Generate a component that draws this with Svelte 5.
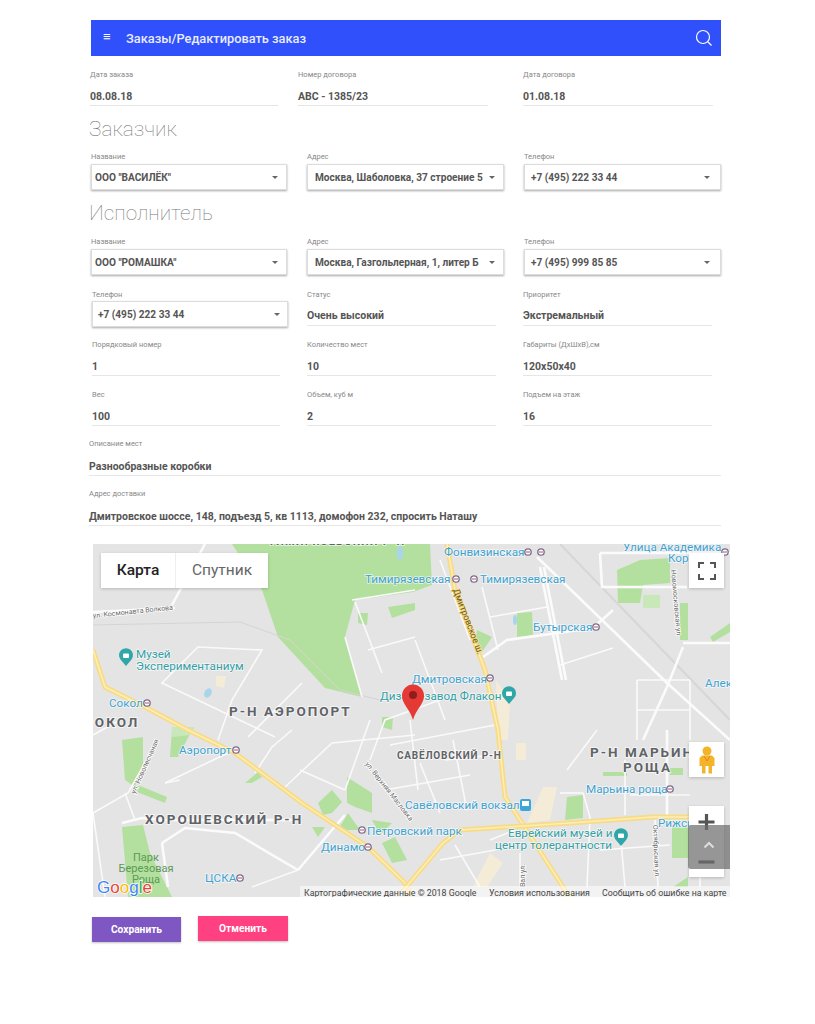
<script>
  const dates = [
    { label: 'Дата заказа', value: '08.08.18' },
    { label: 'Номер договора', value: 'АВС - 1385/23' },
    { label: 'Дата договора', value: '01.08.18' }
  ];
  const customer = [
    { label: 'Название', value: 'ООО "ВАСИЛЁК"' },
    { label: 'Адрес', value: 'Москва, Шаболовка, 37 строение 5' },
    { label: 'Телефон', value: '+7 (495) 222 33 44' }
  ];
  const contractor = [
    { label: 'Название', value: 'ООО "РОМАШКА"' },
    { label: 'Адрес', value: 'Москва, Газгольлерная, 1, литер Б' },
    { label: 'Телефон', value: '+7 (495) 999 85 85' }
  ];
  const cargoA = [
    { label: 'Порядковый номер', value: '1' },
    { label: 'Количество мест', value: '10' },
    { label: 'Габариты (ДхШхВ),см', value: '120х50х40' }
  ];
  const cargoB = [
    { label: 'Вес', value: '100' },
    { label: 'Объем, куб м', value: '2' },
    { label: 'Подъем на этаж', value: '16' }
  ];

  // map layers use page coordinates, see the svg viewBox
  const parks = [
    '232,544 430,544 432,585 413,592 355,600 345,637 362,697 325,688 278,637 262,590',
    '617,570 640,560 670,558 670,583 643,585 640,603 618,603',
    '517,613 532,612 533,635 517,637',
    '477,630 492,637 482,652 475,643',
    '680,603 688,603 688,640 680,640',
    '710,637 730,623 730,632 713,642',
    '567,797 583,795 583,818 565,820',
    '672,827 690,827 690,858 672,858',
    '603,772 627,772 627,776 603,776',
    '670,768 683,768 683,775 670,775',
    '673,887 688,877 688,887',
    '122,740 143,737 143,763 135,787 125,780',
    '172,730 192,730 178,757 170,757',
    '138,785 167,797 165,803 137,792',
    '122,827 143,825 150,853 172,897 128,897',
    '318,803 332,790 342,802 332,813 323,815',
    '347,777 372,793 372,813 355,807 347,803',
    '348,813 360,830 338,830',
    '372,820 392,823 380,835',
    '382,843 395,837 407,860 392,863',
    '245,783 258,772 262,777 252,783',
    '312,827 325,827 318,837',
    '388,607 415,603 415,610 392,618',
    '358,613 368,613 367,625 358,623',
    '382,717 393,717 392,730 382,727'
  ];
  const lightParks = ['643,595 660,595 660,608 643,608', '172,727 195,727 190,735 172,737'];
  const sand = [
    '543,787 557,787 550,820 527,823',
    '490,853 503,863 487,887 473,887',
    '516,743 526,743 526,760 516,760',
    '496,680 510,700 508,740 498,740',
    '216,676 226,676 224,688 216,686'
  ];
  const yellow = [
    '93,650 105,687 145,707 188,730 235,753 302,803 368,847 405,883 412,897',
    '447,544 455,590 485,670 498,730 505,797 520,820 563,887 570,897',
    '690,817 653,817 570,823 460,830 443,843 402,892'
  ];
  const thick = [
    '205,544 172,605',
    '92,612 175,608',
    '600,553 730,553',
    '600,553 602,587 687,587',
    '537,557 667,683 730,740',
    '540,567 562,680',
    '544,567 566,680',
    '483,657 507,640 593,628 613,610',
    '667,730 667,817',
    '122,823 142,818 165,820 300,820',
    '162,843 185,828 235,833 298,870',
    '162,843 168,887',
    '298,870 332,830 345,815',
    '683,647 667,687 643,740',
    '683,643 730,643'
  ];
  const streets = [
    '198,647 262,650 232,700 218,740',
    '198,647 162,683 275,737',
    '302,683 248,737',
    '352,600 415,590',
    '355,602 382,673',
    '368,650 415,637',
    '345,637 362,697',
    '490,617 547,607',
    '482,587 498,650',
    '560,665 613,648',
    '637,680 637,740',
    '690,680 690,740',
    '637,680 690,680',
    '637,710 690,710',
    '93,813 128,793 155,745',
    '93,813 105,897',
    '125,793 135,820',
    '285,787 332,743 415,735',
    '255,773 272,747 292,730',
    '165,783 228,753',
    '165,783 180,780',
    '252,887 298,870',
    '567,770 597,730',
    '560,793 583,793 590,817',
    '453,740 467,810',
    '420,763 440,813',
    '590,817 587,887',
    '520,853 520,887',
    '620,830 625,887',
    '655,820 658,887',
    '700,817 700,887',
    '630,795 690,795',
    '625,760 625,815',
    '440,700 385,720 370,760',
    '410,720 418,790',
    '390,745 495,725',
    '385,790 470,775',
    '445,760 495,755',
    '93,735 120,720',
    '440,560 470,640',
    '415,640 445,720',
    '370,720 345,790',
    '300,770 345,790',
    '600,850 670,845',
    '490,840 515,830',
    '440,860 495,850',
    '480,887 455,845'
  ];
  const stations = [
    [528, 552], [541, 552], [725, 552], [456, 579], [474, 579], [596, 627], [490, 678],
    [147, 703], [236, 750], [670, 789], [362, 830], [368, 847], [240, 878]
  ];
  const labels = [
    { x: 444, y: 552, t: 'Фонвизинская' },
    { x: 623, y: 547, t: 'Улица Академика' },
    { x: 668, y: 558, t: 'Кор' },
    { x: 365, y: 579, t: 'Тимирязевская' },
    { x: 480, y: 579, t: 'Тимирязевская' },
    { x: 533, y: 627, t: 'Бутырская' },
    { x: 412, y: 679, t: 'Дмитровская' },
    { x: 705, y: 683, t: 'Алек' },
    { x: 109, y: 703, t: 'Сокол' },
    { x: 179, y: 750, t: 'Аэропорт' },
    { x: 586, y: 789, t: 'Марьина роща' },
    { x: 405, y: 805, t: 'Савёловский вокзал' },
    { x: 367, y: 831, t: 'Петровский парк' },
    { x: 321, y: 847, t: 'Динамо' },
    { x: 658, y: 823, t: 'Рижская' },
    { x: 205, y: 878, t: 'ЦСКА' }
  ];
  const poi = [
    { x: 380, y: 696, t: 'Дизайн-завод Флакон' },
    { x: 136, y: 654, t: 'Музей' },
    { x: 136, y: 666, t: 'Экспериментаниум' },
    { x: 508, y: 833, t: 'Еврейский музей и' },
    { x: 495, y: 845, t: 'центр толерантности' }
  ];
  const districts = [
    { x: 229, y: 711, t: 'Р-Н АЭРОПОРТ', s: 13.5, ls: 2 },
    { x: 84, y: 722, t: 'СОКОЛ', s: 13.5, ls: 2 },
    { x: 397, y: 754, t: 'САВЁЛОВСКИЙ Р-Н', s: 10, ls: 0.8 },
    { x: 590, y: 752, t: 'Р-Н МАРЬИНА', s: 13.5, ls: 2 },
    { x: 623, y: 767, t: 'РОЩА', s: 13.5, ls: 2 },
    { x: 145, y: 819, t: 'ХОРОШЕВСКИЙ Р-Н', s: 13.5, ls: 2 },
    { x: 268, y: 540, t: 'ТИМИРЯЗЕВСКИЙ Р-Н', s: 11, ls: 1.2 }
  ];
  const roadNames = [
    { x: 453, y: 590, r: 69, t: 'Дмитровское ш.', c: 'road-dark' },
    { x: 671, y: 570, r: 85, t: 'Новомосковская ул.', c: '' },
    { x: 93, y: 618, r: -6, t: 'ул. Космонавта Волкова', c: '' },
    { x: 135, y: 794, r: -66, t: 'ул. Новопесчаная', c: '' },
    { x: 365, y: 764, r: 52, t: 'ул. Верхняя Масловка', c: '' },
    { x: 653, y: 825, r: 88, t: 'Октябрьская ул.', c: '' },
    { x: 525, y: 887, r: -90, t: 'Вал ул.', c: '' }
  ];
  const poiPins = [[126, 656], [509, 694], [621, 836]];
</script>

{#snippet field(item)}
  <div class="field">
    <div class="label">{item.label}</div>
    <div class="value">{item.value}</div>
  </div>
{/snippet}

{#snippet picker(item)}
  <div class="picker">
    <div class="label">{item.label}</div>
    <button class="select" type="button">
      <span class="select-text">{item.value}</span>
      <span class="caret"></span>
    </button>
  </div>
{/snippet}

<div class="page">
  <header class="topbar">
    <span class="burger">≡</span>
    <h1>Заказы/Редактировать заказ</h1>
    <svg class="search" viewBox="0 0 18 18" width="18" height="18" fill="none" stroke="#fff">
      <circle cx="8" cy="8" r="6.5" stroke-width="1.2" />
      <path d="M13 13l3.5 3.5" stroke-width="1.2" />
    </svg>
  </header>

  <div class="row row-dates">
    {#each dates as item}
      {@render field(item)}
    {/each}
  </div>

  <h2>Заказчик</h2>
  <div class="row row-pickers">
    {#each customer as item}
      {@render picker(item)}
    {/each}
  </div>

  <h2 class="second">Исполнитель</h2>
  <div class="row row-pickers">
    {#each contractor as item}
      {@render picker(item)}
    {/each}
  </div>

  <div class="row row-mixed">
    {@render picker({ label: 'Телефон', value: '+7 (495) 222 33 44' })}
    <div class="field tight">
      <div class="label">Статус</div>
      <div class="value">Очень высокий</div>
    </div>
    <div class="field tight">
      <div class="label">Приоритет</div>
      <div class="value">Экстремальный</div>
    </div>
  </div>

  <div class="row row-cargo">
    {#each cargoA as item}
      {@render field(item)}
    {/each}
  </div>
  <div class="row row-cargo">
    {#each cargoB as item}
      {@render field(item)}
    {/each}
  </div>

  <div class="wide">
    <div class="field long">
      <div class="label">Описание мест</div>
      <div class="value">Разнообразные коробки</div>
    </div>
    <div class="field long">
      <div class="label">Адрес доставки</div>
      <div class="value">Дмитровское шоссе, 148, подъезд 5, кв 1113, домофон 232, спросить Наташу</div>
    </div>
  </div>

  <div class="map">
    <svg class="map-canvas" viewBox="93 544 637 353" width="637" height="353">
      <rect x="93" y="544" width="637" height="353" fill="#e4e4e4" />
      {#each sand as p}
        <polygon points={p} fill="#f5ecd8" />
      {/each}
      {#each parks as p}
        <polygon points={p} fill="#b4e09f" />
      {/each}
      {#each lightParks as p}
        <polygon points={p} fill="#c9e8ba" />
      {/each}
      <ellipse cx="400" cy="553" rx="3" ry="7" fill="#a8d4ee" />
      <ellipse cx="208" cy="693" rx="3.5" ry="5" transform="rotate(30 208 693)" fill="#a8d4ee" />
      <ellipse cx="515" cy="620" rx="2" ry="5" fill="#a8d4ee" />
      <path d="M93 625 L240 622 L290 640 L340 690 L380 700" fill="none" stroke="#d4d4d4" />
      <path d="M560 544 L730 720" fill="none" stroke="#d6d6d6" stroke-width="2" />
      {#each streets as s}
        <polyline points={s} fill="none" stroke="#fafafa" stroke-width="1.6" />
      {/each}
      {#each thick as s}
        <polyline points={s} fill="none" stroke="#fbfbfb" stroke-width="2.6" />
      {/each}
      {#each yellow as y}
        <polyline points={y} fill="none" stroke="#f8db85" stroke-width="5" stroke-linejoin="round" />
        <polyline points={y} fill="none" stroke="#fdeeb8" stroke-width="1.5" stroke-linejoin="round" />
      {/each}

      {#each roadNames as n}
        <text class="road {n.c}" transform="translate({n.x} {n.y}) rotate({n.r})">{n.t}</text>
      {/each}
      {#each districts as d}
        <text class="district" x={d.x} y={d.y + 4.5} font-size={d.s} letter-spacing={d.ls}>{d.t}</text>
      {/each}
      {#each labels as l}
        <text class="transit" x={l.x} y={l.y + 4}>{l.t}</text>
      {/each}
      {#each poi as l}
        <text class="poi" x={l.x} y={l.y + 4}>{l.t}</text>
      {/each}
      <text class="park" x="146" y="861" text-anchor="middle">Парк</text>
      <text class="park" x="146" y="872" text-anchor="middle">Березовая</text>
      <text class="park" x="146" y="883" text-anchor="middle">Роща</text>

      {#each stations as [x, y]}
        <circle cx={x} cy={y} r="3.2" fill="#fff" stroke="#7d6a8c" stroke-width="1.3" />
        <path d="M{x - 2} {y}h4" stroke="#b0506c" stroke-width="1" />
      {/each}
      {#each poiPins as [x, y]}
        <path d="M{x} {y + 10} L{x - 5.5} {y + 3.5} A7 7 0 1 1 {x + 5.5} {y + 3.5} Z" fill="#2fa6a8" />
        <rect x={x - 3} y={y - 2.5} width="6" height="4.5" rx="1" fill="#fff" />
      {/each}
      <rect x="520" y="799" width="11" height="12" rx="2" fill="#3ea6d6" />
      <rect x="522" y="801" width="7" height="5" fill="#fff" />

      <!-- marker -->
      <path d="M413 720 C410 709 402 704 402 696 A11 11.5 0 1 1 424 696 C424 704 416 709 413 720Z" fill="#e53935" />
      <circle cx="413" cy="695" r="4" fill="#8f1d1d" />

      <rect x="300" y="886" width="430" height="11" fill="#fff" fill-opacity="0.55" />
      <text class="legal" x="304" y="896">Картографические данные © 2018 Google</text>
      <text class="legal" x="489" y="896">Условия использования</text>
      <text class="legal" x="602" y="896">Сообщить об ошибке на карте</text>

      <text class="google" x="97" y="893"><tspan fill="#4285f4">G</tspan><tspan fill="#ea4335">o</tspan><tspan fill="#fbbc05">o</tspan><tspan fill="#4285f4">g</tspan><tspan fill="#34a853">l</tspan><tspan fill="#ea4335">e</tspan></text>
    </svg>

    <div class="map-type">
      <span class="type active">Карта</span>
      <span class="type">Спутник</span>
    </div>

    <button class="ctl fullscreen" type="button" aria-label="fullscreen">
      <svg viewBox="0 0 18 18" width="18" height="18" fill="none" stroke="#555" stroke-width="2">
        <path d="M1 6V1h5M12 1h5v5M17 12v5h-5M6 17H1v-5" />
      </svg>
    </button>

    <button class="ctl pegman" type="button" aria-label="street view">
      <svg viewBox="0 0 18 28" width="18" height="28">
        <circle cx="9" cy="5" r="4.5" fill="#f4b42a" />
        <path d="M4 9.5h10l2.5 2.5v8H14v7.5h-3.5V20h-3v7.5H4V20H1.5v-8z" fill="#f4b42a" />
        <path d="M6 10l3 5 3-5" fill="none" stroke="#e5841f" />
      </svg>
    </button>

    <div class="zoom">
      <svg viewBox="0 0 35 71" width="35" height="71">
        <path d="M17.5 8v16M9.5 16h16" stroke="#555" stroke-width="3.2" />
        <path d="M9.5 56h16" stroke="#555" stroke-width="3.2" />
      </svg>
    </div>

    <button class="to-top" type="button" aria-label="up">
      <svg viewBox="0 0 12 8" width="12" height="8" fill="none" stroke="#ddd" stroke-width="2">
        <path d="M1.5 6.5L6 2l4.5 4.5" />
      </svg>
    </button>
  </div>

  <div class="actions">
    <button class="btn save" type="button">Сохранить</button>
    <button class="btn cancel" type="button">Отменить</button>
  </div>
</div>

<style>
:global(body) {
  background: #fff;
}

.page {
  width: 639px;
  margin-left: 91px;
  padding-top: 20px;
  padding-bottom: 82px;
  font-family: Roboto, sans-serif;
  color: #555;
}

/* Header */
.topbar {
  display: flex;
  align-items: center;
  width: 630px;
  height: 36px;
  box-sizing: border-box;
  padding: 0 8px 0 12px;
  background: #2f50fb;
  color: #fff;
}

.burger {
  width: 23px;
  font-size: 13px;
  line-height: 1;
  margin-top: -3px;
}

h1 {
  flex: 1;
  margin: 1px 0 0;
  font-size: 12.8px;
  font-weight: 500;
  color: #e8ecff;
}

h2 {
  margin: 11px 0 10px -2px;
  font-size: 20.8px;
  line-height: 24px;
  font-weight: 100;
  color: #777;
}

h2.second {
  margin-bottom: 11px;
}

/* Rows */
.row {
  display: grid;
}

.row-dates {
  grid-template-columns: 208px 225px 190px;
  margin: 13px 0 0 -1px;
}

.row-dates .field:nth-child(1) {
  margin-right: 20px;
}

.row-dates .field:nth-child(2) {
  margin-right: 35px;
}

.row-pickers {
  grid-template-columns: 196px 197px 197px;
  column-gap: 20px;
}

.row-mixed {
  grid-template-columns: 215px 216px 189px;
  margin: 14px 0 0 1px;
}

.row-mixed .picker {
  margin-right: 19px;
}

.row-mixed .field:nth-child(2) {
  margin-right: 27px;
}

.row-cargo {
  grid-template-columns: 188px 189px 189px;
  column-gap: 27px;
  margin: 12px 0 0 1px;
}

.row-cargo + .row-cargo {
  margin-top: 13px;
}

.wide {
  width: 632px;
  margin-left: -2px;
}

.long {
  margin-top: 12px;
}

.long .value {
  margin-top: 10px;
}

/* Fields */
.label {
  height: 10px;
  font-size: 7.5px;
  line-height: 12px;
  color: #888;
}

.value {
  height: 16px;
  margin-top: 9px;
  padding-bottom: 1px;
  border-bottom: 1px solid #e6e6e6;
  box-sizing: content-box;
  font-size: 10.5px;
  font-weight: 700;
  line-height: 18px;
  color: #555;
}

.tight .value {
  margin-top: 8px;
  padding-bottom: 2px;
}

.select {
  display: flex;
  align-items: center;
  justify-content: space-between;
  width: 100%;
  height: 26px;
  margin-top: 3px;
  padding: 0 8px 0 3px;
  box-sizing: border-box;
  background: #fff;
  border: 1px solid #dcdcdc;
  box-shadow: 0 1px 2px rgba(0, 0, 0, 0.35);
  font-family: inherit;
  font-size: 10.1px;
  font-weight: 700;
  color: #555;
  white-space: nowrap;
}

.row-pickers .picker:nth-child(2) .select {
  padding: 0 8px 0 7px;
}

.row-pickers .picker:nth-child(3) .select {
  padding: 0 10px 0 6px;
}

.row-mixed .select {
  margin-top: 2px;
  padding: 0 7px 0 5px;
}

.caret {
  flex: none;
  width: 0;
  height: 0;
  border: 3px solid transparent;
  border-top-color: #666;
  border-bottom: 0;
}

/* Map */
.map {
  position: relative;
  width: 637px;
  height: 353px;
  margin: 18px 0 0 2px;
  overflow: hidden;
}

.map-canvas {
  display: block;
}

.road {
  font-size: 7px;
  font-family: Roboto, sans-serif;
  fill: #666;
  stroke: #fff;
  stroke-width: 1.5px;
  paint-order: stroke;
}

.road-dark {
  font-size: 9px;
  fill: #6b5a2a;
  stroke: #f6d97e;
}

.district {
  font-family: Roboto, sans-serif;
  font-weight: 700;
  fill: #5f6368;
  stroke: #fff;
  stroke-width: 2px;
  stroke-opacity: 0.6;
  paint-order: stroke;
}

.transit {
  font-size: 11.7px;
  font-family: Roboto, sans-serif;
  fill: #3ea2d0;
  stroke: #fff;
  stroke-width: 1.5px;
  stroke-opacity: 0.7;
  paint-order: stroke;
}

.poi {
  font-size: 11.7px;
  font-family: Roboto, sans-serif;
  fill: #33a0a5;
  stroke: #fff;
  stroke-width: 1.5px;
  stroke-opacity: 0.7;
  paint-order: stroke;
}

.park {
  font-size: 11px;
  font-family: Roboto, sans-serif;
  fill: #5a9a55;
}

.legal {
  font-size: 8.8px;
  font-family: Roboto, sans-serif;
  fill: #444;
}

.google {
  font-size: 17px;
  font-family: "Liberation Sans", sans-serif;
  stroke: #fff;
  stroke-width: 1.5px;
  paint-order: stroke;
}

.map-type {
  position: absolute;
  top: 9px;
  left: 8px;
  display: flex;
  width: 167px;
  height: 35px;
  background: #fff;
  box-shadow: 0 1px 3px rgba(0, 0, 0, 0.2);
  font-size: 15.5px;
  line-height: 35px;
}

.type {
  flex: 1;
  text-align: center;
  color: #666;
}

.active {
  flex: none;
  width: 75px;
  box-sizing: border-box;
  border-right: 1px solid #eee;
  font-weight: 500;
  color: #222;
}

.ctl,
.zoom {
  position: absolute;
  left: 596px;
  width: 35px;
  padding: 0;
  border: 0;
  background: #fff;
  box-shadow: 0 1px 3px rgba(0, 0, 0, 0.2);
}

.ctl {
  display: flex;
  align-items: center;
  justify-content: center;
  height: 35px;
}

.fullscreen {
  top: 9px;
}

.pegman {
  top: 198px;
}

.zoom {
  top: 262px;
  height: 71px;
}

.zoom svg {
  display: block;
}

.to-top {
  position: absolute;
  left: 595px;
  top: 281px;
  width: 42px;
  height: 44px;
  padding: 16px 0 0;
  border: 0;
  border-radius: 3px 0 0 3px;
  background: rgba(110, 110, 110, 0.72);
  display: flex;
  justify-content: center;
  align-items: flex-start;
}

/* Buttons */
.actions {
  display: flex;
  align-items: flex-start;
  gap: 17px;
  margin: 19px 0 0 1px;
}

.btn {
  width: 89px;
  height: 25px;
  padding: 0;
  border: 0;
  box-shadow: 0 1px 2px rgba(0, 0, 0, 0.25);
  font-family: inherit;
  font-size: 10.2px;
  font-weight: 700;
  color: #fff;
}

.save {
  margin-top: 1px;
  background: #7e57c2;
}

.cancel {
  width: 90px;
  background: #ff4081;
}
</style>
